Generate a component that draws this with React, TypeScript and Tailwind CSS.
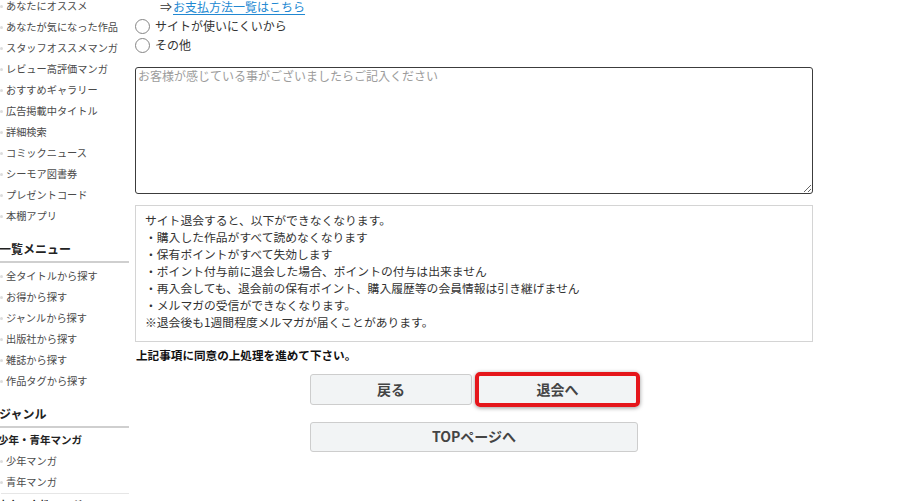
import type { ReactNode } from "react";

const recommendLinks = [
  "あなたにオススメ",
  "あなたが気になった作品",
  "スタッフオススメマンガ",
  "レビュー高評価マンガ",
  "おすすめギャラリー",
  "広告掲載中タイトル",
  "詳細検索",
  "コミックニュース",
  "シーモア図書券",
  "プレゼントコード",
  "本棚アプリ",
];

const listMenu = [
  "全タイトルから探す",
  "お得から探す",
  "ジャンルから探す",
  "出版社から探す",
  "雑誌から探す",
  "作品タグから探す",
];

const notices = [
  "サイト退会すると、以下ができなくなります。",
  "・購入した作品がすべて読めなくなります",
  "・保有ポイントがすべて失効します",
  "・ポイント付与前に退会した場合、ポイントの付与は出来ません",
  "・再入会しても、退会前の保有ポイント、購入履歴等の会員情報は引き継げません",
  "・メルマガの受信ができなくなります。",
  "※退会後も1週間程度メルマガが届くことがあります。",
];

const SideLink = ({ children }: { children: ReactNode }) => (
  <li className="flex h-[21px] items-center text-[10.2px] text-[#4a4a4a]">
    <span className="mr-[3px] -ml-[1px] h-[3px] w-[3px] rounded-full bg-[#dcdcdc]" />
    {children}
  </li>
);

const SideHeading = ({ children }: { children: ReactNode }) => (
  <div className="mt-[13.5px] -ml-[4px] border-b-2 border-[#cfcfcf] pb-[3px] pl-[2px]">
    <h3 className="text-[12px] leading-[18px] font-bold text-[#222]">{children}</h3>
  </div>
);

const Sidebar = () => (
  <aside className="-mt-[4.5px] w-[129px] shrink-0 pl-[1px]">
    <ul>
      {recommendLinks.map((label) => (
        <SideLink key={label}>{label}</SideLink>
      ))}
    </ul>
    <SideHeading>一覧メニュー</SideHeading>
    <ul className="mt-[2.5px]">
      {listMenu.map((label) => (
        <SideLink key={label}>{label}</SideLink>
      ))}
    </ul>
    <SideHeading>ジャンル</SideHeading>
    <div className="mt-[1.5px] -ml-[3px] flex h-[21px] items-center text-[10.5px] font-bold text-[#222]">
      少年・青年マンガ
    </div>
    <ul className="border-b border-[#e6e6e6]">
      <SideLink>少年マンガ</SideLink>
      <SideLink>青年マンガ</SideLink>
    </ul>
    <div className="mt-[1px] -ml-[3px] flex h-[21px] items-center text-[10.5px] font-bold text-[#222]">
      少女・女性マンガ
    </div>
  </aside>
);

const Radio = ({ label }: { label: string }) => (
  <label className="flex h-[19px] items-center text-[12px] text-[#333]">
    <input type="radio" name="reason" className="sr-only" />
    <span className="mr-[5px] h-[15px] w-[15px] rounded-full border-[1.5px] border-[#858585] bg-white" />
    {label}
  </label>
);

const ActionButton = ({ children, className = "" }: { children: ReactNode; className?: string }) => (
  <button
    type="button"
    className={`relative rounded-[3px] border border-[#cdcdcd] bg-[#f2f4f5] text-[14px] font-bold text-[#444] ${className}`}
  >
    {children}
  </button>
);

export default function App() {
  return (
    <div className="h-[501px] w-[900px] overflow-hidden bg-white font-['Noto_Sans_CJK_JP','Noto_Sans',sans-serif]">
      <div className="flex items-start">
        <Sidebar />
        <main className="ml-[6px] w-[678px]">
          <div className="-mt-[2.5px]">
            <div className="flex h-[19px] items-center pl-[25px] text-[12px] text-[#333]">
              ⇒
              <a href="#" className="ml-[1px] text-[#2188d2] underline underline-offset-2">
                お支払方法一覧はこちら
              </a>
            </div>
            <Radio label="サイトが使いにくいから" />
            <Radio label="その他" />
          </div>

          <textarea
            className="mt-[12.5px] block h-[127px] w-full resize rounded-[3px] border-[1.5px] border-[#3c3c3c] px-[2px] py-0 text-[12px] leading-[16px] text-[#333] outline-none placeholder:text-[#9c9c9c]"
            placeholder="お客様が感じている事がございましたらご記入ください"
          />

          <div className="mt-[11px] h-[137px] border border-[#d4d4d4] pt-[5px] pl-[9px] text-[11.8px] leading-[17px] text-[#333]">
            {notices.map((line) => (
              <p key={line}>{line}</p>
            ))}
          </div>

          <p className="mt-[5px] pl-[1px] text-[11.6px] leading-[17px] font-bold text-[#111]">
            上記事項に同意の上処理を進めて下さい。
          </p>

          <div className="mt-[9.5px] flex flex-col items-center">
            <div className="flex gap-[5px]">
              <ActionButton className="h-[31px] w-[162px]">戻る</ActionButton>
              <ActionButton className="h-[31px] w-[161px]">
                退会へ
                <span className="pointer-events-none absolute -inset-[3px] rounded-[5px] border-[4px] border-[#e5161b] shadow-[0_1px_4px_rgba(0,0,0,0.4)]" />
              </ActionButton>
            </div>
            <ActionButton className="mt-[17px] h-[30px] w-[328px]">TOPページへ</ActionButton>
          </div>
        </main>
      </div>
    </div>
  );
}
